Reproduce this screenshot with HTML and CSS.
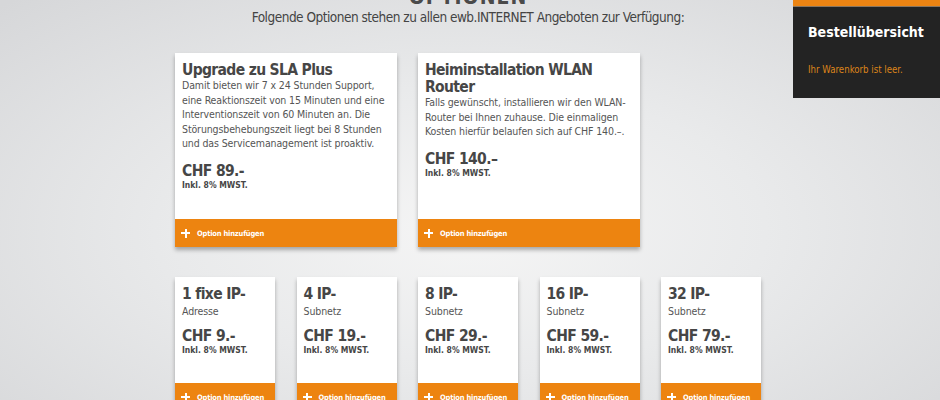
FILE: index.html
```html
<!DOCTYPE html>
<html lang="de">
<head>
<meta charset="utf-8">
<title>Optionen</title>
<link rel="stylesheet" href="styles.css">
</head>
<body>
<main class="page">
  <h1 class="heading">OPTIONEN</h1>
  <p class="intro">Folgende Optionen stehen zu allen ewb.INTERNET Angeboten zur Verfügung:</p>
  <div class="grid">
    <section class="card card-wide">
      <div class="card-body">
        <h2 class="card-title">Upgrade zu SLA Plus</h2>
        <p class="card-text">Damit bieten wir 7 x 24 Stunden Support, eine Reaktionszeit von 15 Minuten und eine Interventionszeit von 60 Minuten an. Die Störungsbehebungszeit liegt bei 8 Stunden und das Servicemanagement ist proaktiv.</p>
        <div class="price">CHF 89.-</div>
        <div class="vat">Inkl. 8% MWST.</div>
      </div>
      <button class="add"><span class="plus"></span>Option hinzufügen</button>
    </section>
    <section class="card card-wide">
      <div class="card-body">
        <h2 class="card-title">Heiminstallation WLAN Router</h2>
        <p class="card-text">Falls gewünscht, installieren wir den WLAN-Router bei Ihnen zuhause. Die einmaligen Kosten hierfür belaufen sich auf CHF 140.–.</p>
        <div class="price">CHF 140.–</div>
        <div class="vat">Inkl. 8% MWST.</div>
      </div>
      <button class="add"><span class="plus"></span>Option hinzufügen</button>
    </section>
    <div class="spacer"></div>

    <section class="card card-small">
      <div class="card-body">
        <h2 class="card-title">1 fixe IP-</h2>
        <p class="card-sub">Adresse</p>
        <div class="price">CHF 9.-</div>
        <div class="vat">Inkl. 8% MWST.</div>
      </div>
      <button class="add"><span class="plus"></span>Option hinzufügen</button>
    </section>
    <section class="card card-small">
      <div class="card-body">
        <h2 class="card-title">4 IP-</h2>
        <p class="card-sub">Subnetz</p>
        <div class="price">CHF 19.-</div>
        <div class="vat">Inkl. 8% MWST.</div>
      </div>
      <button class="add"><span class="plus"></span>Option hinzufügen</button>
    </section>
    <section class="card card-small">
      <div class="card-body">
        <h2 class="card-title">8 IP-</h2>
        <p class="card-sub">Subnetz</p>
        <div class="price">CHF 29.-</div>
        <div class="vat">Inkl. 8% MWST.</div>
      </div>
      <button class="add"><span class="plus"></span>Option hinzufügen</button>
    </section>
    <section class="card card-small">
      <div class="card-body">
        <h2 class="card-title">16 IP-</h2>
        <p class="card-sub">Subnetz</p>
        <div class="price">CHF 59.-</div>
        <div class="vat">Inkl. 8% MWST.</div>
      </div>
      <button class="add"><span class="plus"></span>Option hinzufügen</button>
    </section>
    <section class="card card-small">
      <div class="card-body">
        <h2 class="card-title">32 IP-</h2>
        <p class="card-sub">Subnetz</p>
        <div class="price">CHF 79.-</div>
        <div class="vat">Inkl. 8% MWST.</div>
      </div>
      <button class="add"><span class="plus"></span>Option hinzufügen</button>
    </section>
  </div>
</main>
<aside class="cart">
  <h3 class="cart-title">Bestellübersicht</h3>
  <p class="cart-empty">Ihr Warenkorb ist leer.</p>
</aside>
</body>
</html>
```
FILE: styles.css
```css
html, body {
  margin: 0;
  height: 100%;
  overflow: hidden;
}
body {
  font-family: "DejaVu Sans Condensed", "DejaVu Sans", "Liberation Sans", sans-serif;
  color: #4a4a4a;
  background: radial-gradient(ellipse 70% 80% at 470px 230px, #f5f5f5 0%, #e9eaeb 45%, #d6d7d9 100%);
}
.page {
  width: 590px;
  box-sizing: border-box;
  padding-right: 4px;
  margin: 0 auto;
  display: flex;
  flex-direction: column;
  align-items: center;
}
.heading {
  margin: -14px 0 0;
  font-size: 21px;
  line-height: 22px;
  font-weight: 700;
  letter-spacing: 1px;
  color: #4a4a4a;
}
.intro {
  margin: 0;
  font-size: 13.5px;
  line-height: 18px;
  letter-spacing: -0.5px;
  color: #444;
  white-space: nowrap;
}
.grid {
  margin-top: 27px;
  width: 586px;
  display: grid;
  grid-template-columns: repeat(5, 100px);
  column-gap: 21.5px;
  row-gap: 30px;
}
.spacer { grid-column: span 1; }
.card {
  background: #fff;
  display: flex;
  flex-direction: column;
  box-shadow: 0 3px 4px rgba(0, 0, 0, 0.3);
}
.card-wide {
  grid-column: span 2;
  height: 194px;
}
.card-small {
  height: 134px;
}
.card-body {
  flex: 1;
  padding: 9px 7px 0;
}
.card-title {
  margin: 0;
  font-size: 15.5px;
  line-height: 17px;
  letter-spacing: -0.65px;
  font-weight: 700;
  color: #464646;
}
.card-text {
  margin: -1px 0 0;
  font-size: 10.5px;
  line-height: 14.5px;
  letter-spacing: -0.12px;
  color: #555;
}
.card-sub {
  margin: 1px 0 0;
  font-size: 10.5px;
  line-height: 14.5px;
  letter-spacing: -0.12px;
  color: #555;
}
.price {
  margin-top: 11px;
  font-size: 15.5px;
  line-height: 18px;
  letter-spacing: -0.6px;
  font-weight: 700;
  color: #464646;
}
.card-small .price { margin-top: 8px; }
.vat {
  font-size: 8.5px;
  line-height: 11px;
  font-weight: 700;
  color: #464646;
}
.add {
  height: 28px;
  border: 0;
  margin: 0;
  padding: 0 0 0 6px;
  background: #ed8410;
  color: #fff;
  font-family: inherit;
  font-size: 7.5px;
  letter-spacing: -0.2px;
  font-weight: 700;
  display: flex;
  align-items: center;
  gap: 7px;
  cursor: pointer;
  white-space: nowrap;
  overflow: hidden;
}
.plus {
  position: relative;
  width: 9px;
  height: 9px;
  flex: none;
}
.plus::before, .plus::after {
  content: "";
  position: absolute;
  background: #fff;
}
.plus::before { left: 0; top: 3.5px; width: 9px; height: 2px; }
.plus::after { left: 3.5px; top: 0; width: 2px; height: 9px; }
.cart {
  position: fixed;
  top: 0;
  right: 0;
  width: 147px;
  height: 98px;
  background: #232323;
  border-top: 6px solid #ec8412;
  box-sizing: border-box;
  padding: 17px 0 0 15px;
}
.cart::before {
  content: "";
  position: absolute;
  left: 0; right: 0; top: 0;
  height: 1px;
  background: #8a7760;
}
.cart-title {
  margin: 0;
  font-size: 14px;
  line-height: 18px;
  font-weight: 700;
  color: #fff;
}
.cart-empty {
  margin: 23px 0 0;
  font-size: 9.6px;
  color: #dd841a;
}
```
